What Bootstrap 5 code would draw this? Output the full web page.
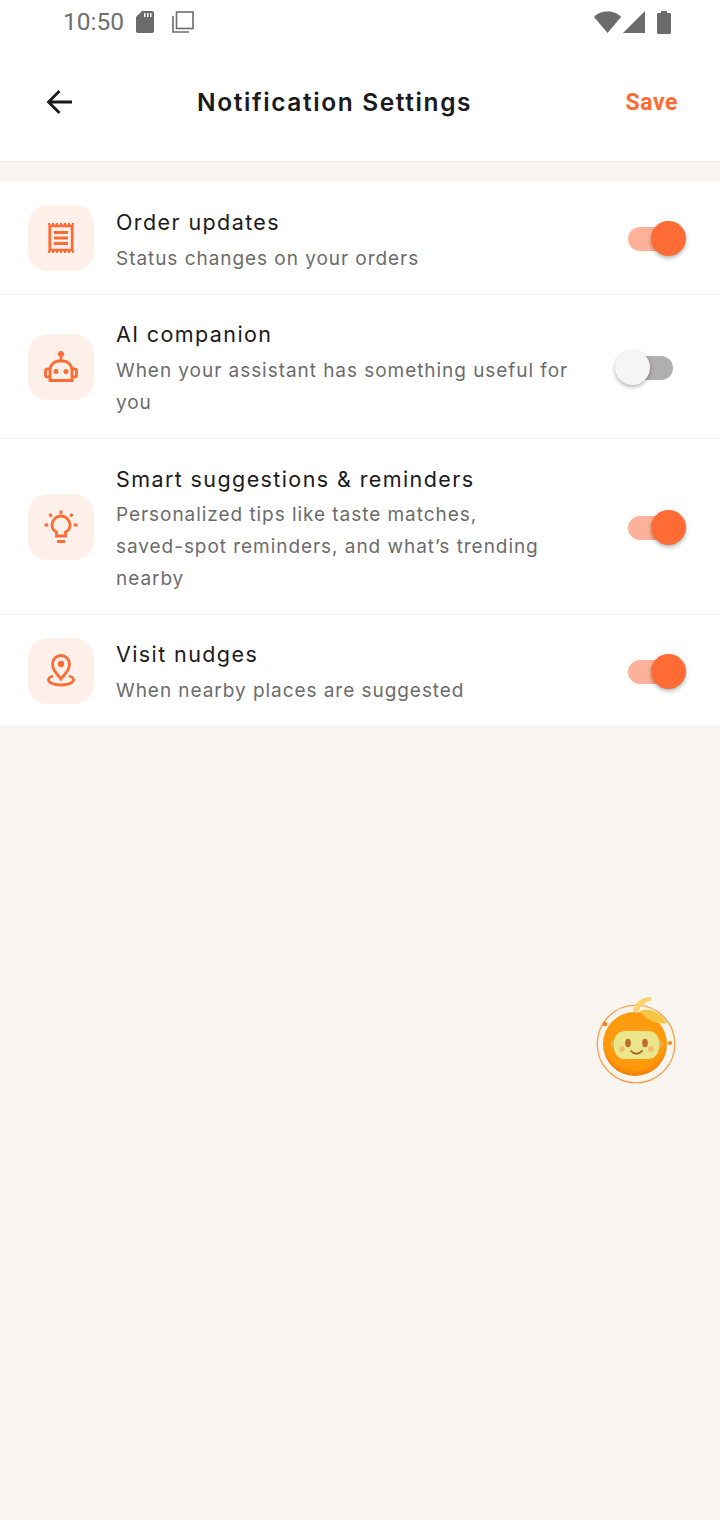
<!DOCTYPE html>
<html lang="en">
<head>
<meta charset="utf-8">
<title>Notification Settings</title>
<link href="https://cdn.jsdelivr.net/npm/bootstrap@5.3.0/dist/css/bootstrap.min.css" rel="stylesheet">
<style>
html,body{height:100%}
body{background:#f8f4f0;font-family:"Inter","Liberation Sans",sans-serif;color:#1a1a1a;width:720px;min-height:1520px;overflow:hidden}
.top-zone{background:#fff;height:162px;border-bottom:1px solid #f0ece8}
.status-strip{height:44px;padding:0 49px 0 63px}
.clock{font-family:"Roboto",sans-serif;font-size:24.5px;line-height:44px;color:#707070;margin-right:12px}
.head-strip{height:117px;padding:0 42px 0 45px}
.page-title{font-size:24.5px;font-weight:600;letter-spacing:1.6px;margin:0 0 0 122px;line-height:1;color:#1a1a1a}
.save-link{font-family:"Roboto",sans-serif;font-weight:700;font-size:23px;color:#ff6b35;letter-spacing:.55px;text-decoration:none;padding-top:2px}
.gap-band{height:20px}
.setting-row{background:#fff;padding:0 34px 0 28px;border-bottom:1px solid #f6f3f0;gap:22px}
.row-a{height:113px}.row-b{height:144px}.row-c{height:176px}.row-d{height:111px;border-bottom:0}
.ico-tile{width:66px;height:66px;border-radius:20px;background:#fff0ea;flex:none}
.row-body{width:462px;flex:none;padding-top:4px}
.row-body-tight{width:429px}
.row-name{font-size:21.5px;line-height:32px;letter-spacing:1.4px;color:#1a1a1a}
.row-note{font-size:19px;line-height:32px;letter-spacing:.95px;color:#6c6c6c;margin-top:5px}
.row-note-close{margin-top:4px}
.sw{position:relative;width:71px;height:36px;flex:none;margin-left:auto}
.sw-track{position:absolute;left:13px;top:7px;width:45px;height:24px;border-radius:12px;background:#ffb299}
.sw-knob{position:absolute;left:36px;top:1px;width:35px;height:35px;border-radius:50%;background:#ff6b35;box-shadow:0 2px 4px rgba(0,0,0,.3)}
.sw.off .sw-track{background:#b0aeae}
.sw.off .sw-knob{background:#f5f5f5;left:0}
.float-bot{position:absolute;left:592px;top:994px;width:90px;height:94px}
</style>
</head>
<body class="position-relative">
<div class="top-zone">
  <div class="status-strip d-flex align-items-center">
    <span class="clock">10:50</span>
    <svg width="18" height="22" viewBox="0 0 18 22"><path fill="#6b6b6b" d="M6 0h10a2 2 0 0 1 2 2v18a2 2 0 0 1-2 2H2a2 2 0 0 1-2-2V6z"/><path fill="#fff" d="M8 2h1.500v4H8zM11 2h1.500v4H11zM14 2h1.500v4H14z"/></svg>
    <svg width="22" height="22" viewBox="0 0 22 22" fill="none" stroke="#6b6b6b" stroke-width="1.600" style="margin-left:18px"><rect x="4.500" y="1" width="16.500" height="16.500"/><path d="M1 5v16h16"/></svg>
    <span class="ms-auto d-flex align-items-center">
      <svg width="27" height="22" viewBox="0 0 27 22"><path fill="#6b6b6b" d="M0 6C3.500 2 8 .5 13.500.5S23.500 2 27 6L13.500 22z"/></svg>
      <svg width="22" height="22" viewBox="0 0 22 22" style="margin-left:2px"><path fill="#6b6b6b" d="M22 0v22H0z"/></svg>
      <svg width="14" height="23" viewBox="0 0 14 23" style="margin-left:12px"><path fill="#6b6b6b" d="M4 0h6v2h2.500A1.500 1.500 0 0 1 14 3.500V21.500A1.500 1.500 0 0 1 12.500 23H1.500A1.500 1.500 0 0 1 0 21.500V3.500A1.500 1.500 0 0 1 1.500 2H4z"/></svg>
    </span>
  </div>
  <div class="head-strip d-flex align-items-center">
    <svg width="30" height="28" viewBox="0 1 30 28" fill="none" stroke="#1a1a1a" stroke-width="2.800"><path d="M27 14H4M14.500 3 3.500 14l11 11"/></svg>
    <h1 class="page-title">Notification Settings</h1>
    <a class="save-link ms-auto" href="#">Save</a>
  </div>
</div>
<div class="gap-band"></div>
<div class="list-wrap">
  <div class="setting-row row-a d-flex align-items-center">
    <div class="ico-tile d-flex align-items-center justify-content-center">
      <svg width="28" height="30" viewBox="0 0 28 30" fill="none" stroke="#ff6b35"><path d="M2.800 2.800h22.400v24.400H2.800z" stroke-width="2.800"/><path d="M7 9.500h14M7 15h14M7 20.500h14" stroke-width="2.800"/><path d="M1 1h26M1 29h26" stroke-width="2" stroke-dasharray="2 2"/></svg>
    </div>
    <div class="row-body">
      <div class="row-name">Order updates</div>
      <div class="row-note">Status changes on your orders</div>
    </div>
    <div class="sw"><span class="sw-track"></span><span class="sw-knob"></span></div>
  </div>
  <div class="setting-row row-b d-flex align-items-center">
    <div class="ico-tile d-flex align-items-center justify-content-center">
      <svg width="34" height="32" viewBox="0 0 34 32" fill="none" stroke="#ff6b35" stroke-width="2.800"><circle cx="17" cy="3" r="3" fill="#ff6b35" stroke="none"/><path d="M17 5v4"/><path d="M6 29.500V19a9 9 0 0 1 9-9h4a9 9 0 0 1 9 9v10.500z"/><path d="M6 18H3.500A2 2 0 0 0 1.500 20v4a2 2 0 0 0 2 2H6M28 18h2.500a2 2 0 0 1 2 2v4a2 2 0 0 1-2 2H28"/><circle cx="12" cy="20.500" r="2.500" fill="#ff6b35" stroke="none"/><circle cx="22" cy="20.500" r="2.500" fill="#ff6b35" stroke="none"/></svg>
    </div>
    <div class="row-body">
      <div class="row-name">AI companion</div>
      <div class="row-note">When your assistant has something useful for you</div>
    </div>
    <div class="sw off"><span class="sw-track"></span><span class="sw-knob"></span></div>
  </div>
  <div class="setting-row row-c d-flex align-items-center">
    <div class="ico-tile d-flex align-items-center justify-content-center">
      <svg width="34" height="34" viewBox="0 0 34 34" fill="none" stroke="#ff6b35" stroke-width="2.800"><path d="M12.500 26v-4c-3-1.500-4.500-4-4.500-7a9 9 0 0 1 18 0c0 3-1.500 5.500-4.500 7v4z"/><path d="M13 31.500h8" stroke-width="3"/><path d="M17 .5v3.500M5.500 4l2.200 2.500M28.500 4l-2.200 2.500M.5 15h3.700M29.800 15h3.700"/></svg>
    </div>
    <div class="row-body row-body-tight">
      <div class="row-name">Smart suggestions &amp; reminders</div>
      <div class="row-note row-note-close">Personalized tips like taste matches, saved-spot reminders, and what’s trending nearby</div>
    </div>
    <div class="sw"><span class="sw-track"></span><span class="sw-knob"></span></div>
  </div>
  <div class="setting-row row-d d-flex align-items-center">
    <div class="ico-tile d-flex align-items-center justify-content-center">
      <svg width="28" height="33" viewBox="0 0 28 33" fill="none" stroke="#ff6b35" stroke-width="2.800"><path d="M14 25C9 19 5.500 15.500 5.500 10a8.500 8.500 0 0 1 17 0c0 5.500-3.500 9-8.500 15z"/><circle cx="14" cy="10" r="3.200" fill="#ff6b35" stroke="none"/><path d="M6 22c-3 .8-4.500 2-4.500 3.800 0 3 5.500 5.200 12.500 5.200s12.500-2.200 12.500-5.200c0-1.800-1.500-3-4.500-3.800"/></svg>
    </div>
    <div class="row-body">
      <div class="row-name">Visit nudges</div>
      <div class="row-note">When nearby places are suggested</div>
    </div>
    <div class="sw"><span class="sw-track"></span><span class="sw-knob"></span></div>
  </div>
</div>
<svg class="float-bot" viewBox="0 0 90 94">
  <defs><radialGradient id="o" cx=".5" cy=".42" r=".58"><stop offset="0" stop-color="#ffa21a"/><stop offset=".82" stop-color="#ff980a"/><stop offset="1" stop-color="#f07c00"/></radialGradient></defs>
  <circle cx="44" cy="50" r="38.800" fill="none" stroke="#f7a04a" stroke-width="1.300"/>
  <circle cx="43" cy="50" r="32" fill="url(#o)"/>
  <path d="M41 18c1-8 6-14 17-15 3 1 2 3 0 4-6 2-10 6-13 12z" fill="#f9d36c"/>
  <path d="M47 17c9-4 20 0 28 12-10 2-20-3-28-12z" fill="#f6c842"/>
  <circle cx="13" cy="30" r="2.300" fill="#f58220"/><circle cx="78" cy="49" r="2" fill="#f58220"/>
  <circle cx="23" cy="50" r="4.500" fill="#f5b04b"/><circle cx="66" cy="50" r="4.500" fill="#f5b04b"/>
  <rect x="22" y="37" width="45" height="28" rx="11" fill="#ebe68c"/>
  <ellipse cx="36" cy="49" rx="2.800" ry="4.200" fill="#c06a2c"/><ellipse cx="53" cy="49" rx="2.800" ry="4.200" fill="#c06a2c"/>
  <circle cx="30" cy="55" r="2.800" fill="#f2bc70"/><circle cx="59" cy="55" r="2.800" fill="#f2bc70"/>
  <path d="M39 57c3 3.500 8 3.500 11 0" fill="none" stroke="#a9551f" stroke-width="1.800" stroke-linecap="round"/>
</svg>
<script src="https://cdn.jsdelivr.net/npm/bootstrap@5.3.0/dist/js/bootstrap.bundle.min.js"></script>
</body>
</html>
